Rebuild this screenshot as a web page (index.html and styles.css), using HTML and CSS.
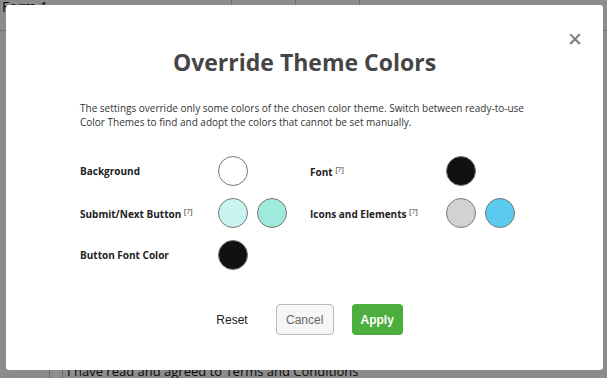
FILE: index.html
```html
<!DOCTYPE html>
<html lang="en">
<head>
    <meta charset="UTF-8">
    <meta name="viewport" content="width=device-width, initial-scale=1.0">
    <title>Override Theme Colors</title>
    <link rel="stylesheet" href="styles.css">
</head>
<body>
    <!-- Page behind the dialog -->
    <div class="page">
        <div class="page-head">
            <div class="page-title">Form 1</div>
            <div class="page-tab"></div>
            <div class="page-tab"></div>
        </div>
        <div class="page-terms">
            <span class="page-check"></span>
            <span>I have read and agreed to Terms and Conditions</span>
        </div>
    </div>

    <div class="overlay"></div>

    <!-- Dialog -->
    <div class="modal">
        <button class="close">&#x2715;</button>
        <h1 class="modal-title">Override Theme Colors</h1>
        <p class="modal-text">The settings override only some colors of the chosen color theme. Switch between ready-to-use Color Themes to find and adopt the colors that cannot be set manually.</p>

        <div class="colors">
            <div class="label">Background</div>
            <div class="swatches">
                <span class="swatch" style="background:#ffffff"></span>
            </div>
            <div class="label">Font <sup>[?]</sup></div>
            <div class="swatches">
                <span class="swatch" style="background:#111111"></span>
            </div>

            <div class="label">Submit/Next Button <sup>[?]</sup></div>
            <div class="swatches">
                <span class="swatch" style="background:#c8f5ef"></span>
                <span class="swatch" style="background:#9eeadd"></span>
            </div>
            <div class="label">Icons and Elements <sup>[?]</sup></div>
            <div class="swatches">
                <span class="swatch" style="background:#d2d2d2"></span>
                <span class="swatch" style="background:#5acbee"></span>
            </div>

            <div class="label">Button Font Color</div>
            <div class="swatches">
                <span class="swatch" style="background:#111111"></span>
            </div>
        </div>

        <div class="actions">
            <button class="btn btn-link">Reset</button>
            <button class="btn btn-cancel">Cancel</button>
            <button class="btn btn-apply">Apply</button>
        </div>
    </div>
</body>
</html>
```

FILE: styles.css
```css
body {
    margin: 0;
    font-family: "Open Sans", "Noto Sans", sans-serif;
    background-color: #fff;
    width: 607px;
    height: 378px;
    overflow: hidden;
    position: relative;
}

/* Page behind the dialog */
.page {
    height: 378px;
    display: flex;
    flex-direction: column;
    justify-content: space-between;
}
.page-head {
    display: flex;
    height: 30px;
    border-bottom: 1px solid #ccc;
}
.page-title {
    width: 229px;
    font-size: 14px;
    line-height: 14px;
    color: #111;
    padding-left: 2px;
    border-right: 1px solid #ccc;
}
.page-tab {
    width: 63px;
    border-right: 1px solid #ccc;
}
.page-terms {
    display: flex;
    align-items: flex-end;
    height: 12px;
    padding-left: 49px;
    font-size: 13px;
    line-height: 13px;
    color: #111;
}
.page-check {
    width: 12px;
    height: 20px;
    border-left: 1px solid #bbb;
    border-right: 1px solid #bbb;
    margin-right: 4px;
}

.overlay {
    position: absolute;
    inset: 0;
    background-color: rgba(0, 0, 0, 0.45);
}

/* Dialog */
.modal {
    position: absolute;
    top: 5px;
    left: 6px;
    width: 597px;
    height: 365px;
    box-sizing: border-box;
    padding: 42px 74px 0;
    background-color: #fff;
    border-radius: 3px;
}
.close {
    position: absolute;
    top: 23px;
    right: 20px;
    border: none;
    background: none;
    padding: 0;
    font-size: 19px;
    line-height: 24px;
    color: #7c7c7c;
    cursor: pointer;
}
.modal-title {
    margin: 0;
    text-align: center;
    font-size: 23px;
    line-height: 30px;
    font-weight: bold;
    color: #454545;
}
.modal-text {
    margin: 24px 0 0;
    font-size: 10px;
    line-height: 14px;
    color: #333;
}

.colors {
    display: grid;
    grid-template-columns: 138px 92px 136px auto;
    row-gap: 12px;
    margin-top: 27px;
    align-items: center;
}
.label {
    font-size: 10px;
    font-weight: bold;
    color: #222;
}
.label sup {
    font-size: 8px;
    font-weight: normal;
    color: #333;
}
.swatches {
    display: flex;
    gap: 9px;
}
.swatch {
    width: 30px;
    height: 30px;
    box-sizing: border-box;
    border: 1px solid #777;
    border-radius: 50%;
}

.actions {
    display: flex;
    justify-content: center;
    align-items: center;
    margin-top: 34px;
    gap: 18px;
}
.btn {
    font-family: "Liberation Sans", Arial, sans-serif;
    font-size: 12px;
    height: 31px;
    border-radius: 4px;
    cursor: pointer;
}
.btn-link {
    border: none;
    background: none;
    color: #222;
    padding: 0 10px;
}
.btn-cancel {
    width: 58px;
    border: 1px solid #bbb;
    background-color: #f6f6f6;
    color: #666;
}
.btn-apply {
    width: 51px;
    border: none;
    background-color: #4cae3c;
    color: #fff;
    font-weight: bold;
}
```
